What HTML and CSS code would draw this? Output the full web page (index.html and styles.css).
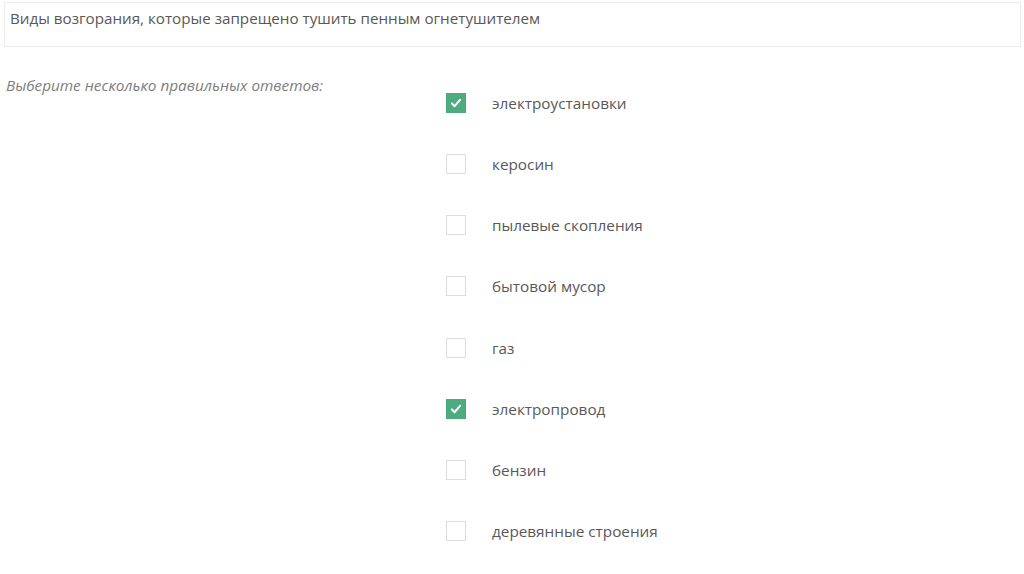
FILE: index.html
```html
<!DOCTYPE html>
<html lang="ru">
<head>
<meta charset="utf-8">
<link rel="stylesheet" href="styles.css">
</head>
<body>
<div class="question">Виды возгорания, которые запрещено тушить пенным огнетушителем</div>
<div class="body">
  <div class="hint">Выберите несколько правильных ответов:</div>
  <ul class="answers">
    <li class="answer"><span class="box checked"><svg viewBox="0 0 20 20" width="20" height="20"><path d="M5.5 10.5 L8.5 13.5 L14.5 6.5" fill="none" stroke="#fff" stroke-width="2.3" stroke-linecap="round" stroke-linejoin="round"/></svg></span><span class="label">электроустановки</span></li>
    <li class="answer"><span class="box"></span><span class="label">керосин</span></li>
    <li class="answer"><span class="box"></span><span class="label">пылевые скопления</span></li>
    <li class="answer"><span class="box"></span><span class="label">бытовой мусор</span></li>
    <li class="answer"><span class="box"></span><span class="label">газ</span></li>
    <li class="answer"><span class="box checked"><svg viewBox="0 0 20 20" width="20" height="20"><path d="M5.5 10.5 L8.5 13.5 L14.5 6.5" fill="none" stroke="#fff" stroke-width="2.3" stroke-linecap="round" stroke-linejoin="round"/></svg></span><span class="label">электропровод</span></li>
    <li class="answer"><span class="box"></span><span class="label">бензин</span></li>
    <li class="answer"><span class="box"></span><span class="label">деревянные строения</span></li>
  </ul>
</div>
</body>
</html>
```
FILE: styles.css
```css
html, body {
  margin: 0;
  padding: 0;
  background: #fff;
}
body {
  font-family: "Open Sans", "Noto Sans", sans-serif;
  color: #555;
  width: 1024px;
  height: 574px;
  overflow: hidden;
}
.question {
  margin: 2px 3px 0 4px;
  height: 45px;
  box-sizing: border-box;
  border: 1px solid #ececec;
  padding: 4px 6px 0 5px;
  font-size: 15.2px;
  line-height: 22px;
  color: #585858;
}
.body {
  display: flex;
  padding-top: 26px;
}
.hint {
  width: 446px;
  padding-left: 6px;
  box-sizing: border-box;
  font-style: italic;
  font-size: 15.3px;
  color: #7d7d7d;
  line-height: 22px;
  margin-top: 1px;
}
.answers {
  list-style: none;
  margin: 0;
  padding: 0;
  display: flex;
  flex-direction: column;
  gap: 41.15px;
  padding-top: 20px;
}
.answer {
  display: flex;
  align-items: center;
  height: 20px;
}
.box {
  width: 20px;
  height: 20px;
  box-sizing: border-box;
  border: 1px solid #dcdcdc;
  background: #fff;
  display: flex;
  align-items: center;
  justify-content: center;
}
.box.checked {
  border-color: #4dab7d;
  background: #4dab7d;
}
.box svg {
  display: block;
}
.label {
  margin-left: 26px;
  font-size: 15.3px;
  color: #585858;
}
```
